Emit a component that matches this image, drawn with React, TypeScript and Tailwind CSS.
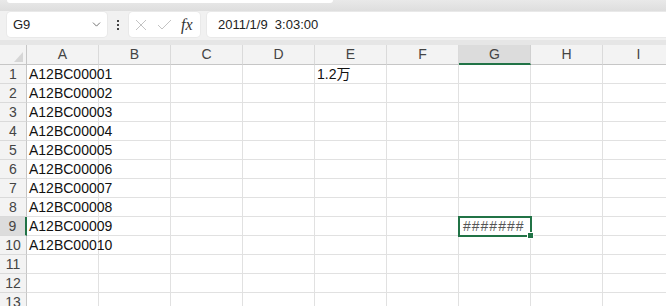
import React from 'react';
import { ChevronDown } from 'lucide-react';

const cols = ['A', 'B', 'C', 'D', 'E', 'F', 'G', 'H', 'I'];
const rows = Array.from({ length: 13 }, (_, i) => i + 1);

const cellValue = (r: number, c: string): string => {
  if (c === 'A' && r <= 10) return `A12BC000${String(r).padStart(2, '0')}`;
  if (c === 'E' && r === 1) return '1.2万';
  if (c === 'G' && r === 9) return '#######';
  return '';
};

const FormulaBar = () => (
  <div className="flex h-[29px] items-start bg-[#f1f1f1] pt-[1px]">
    {/* Name box */}
    <div className="ml-[7px] flex h-[25px] w-[100px] items-center justify-between rounded-[4px] bg-white pr-[4px] pl-[6px] shadow-[0_0_0_1px_#e9e9e9]">
      <span className="text-[13px] text-[#222]">G9</span>
      <ChevronDown size={13} strokeWidth={1.5} className="text-[#555]" />
    </div>
    {/* more dots */}
    <div className="flex h-[25px] w-[22px] flex-col items-center justify-center gap-[2px]">
      <div className="h-[2px] w-[2px] bg-[#444]" />
      <div className="h-[2px] w-[2px] bg-[#444]" />
      <div className="h-[2px] w-[2px] bg-[#444]" />
    </div>
    {/* cancel / enter / fx */}
    <div className="flex h-[25px] w-[71px] items-center rounded-[4px] bg-white pl-[6px] shadow-[0_0_0_1px_#e9e9e9]">
      <svg width="12" height="12" viewBox="0 0 12 12" className="mr-[10px]">
        <path d="M1 1 L11 11 M11 1 L1 11" stroke="#c3c3c3" strokeWidth="1" fill="none" />
      </svg>
      <svg width="15" height="12" viewBox="0 0 15 12" className="mr-[9px]">
        <path d="M1 6 L5 10 L14 1" stroke="#c3c3c3" strokeWidth="1" fill="none" />
      </svg>
      <span className="font-['Liberation_Serif',serif] text-[16px] leading-none text-[#333] italic">fx</span>
    </div>
    {/* formula input */}
    <div className="ml-[7px] flex h-[25px] flex-1 items-center rounded-l-[4px] bg-white pl-[11px] shadow-[0_0_0_1px_#e9e9e9]">
      <span className="text-[13px] whitespace-pre text-[#222]">2011/1/9  3:03:00</span>
    </div>
  </div>
);

const Grid = () => (
  <div className="grid w-[675px] grid-cols-[27px_repeat(9,72px)]">
    {/* corner */}
    <div className="flex h-[20px] items-end justify-end border-r border-b border-[#c6c6c6] bg-[#f3f3f3] pr-[3px] pb-[2px]">
      <svg width="9" height="10" viewBox="0 0 9 10">
        <polygon points="9,0 9,10 0,10" fill="#d6d6d6" />
      </svg>
    </div>
    {cols.map(c => (
      <div
        key={c}
        className={`flex h-[20px] items-center justify-center border-r text-[14px] text-[#444] ${
          c === 'G'
            ? 'border-b-2 border-r-[#d0d0d0] border-b-[#217346] bg-[#dcdcdc]'
            : 'border-b border-r-[#dadada] border-b-[#c6c6c6] bg-[#f3f3f3]'
        }`}
      >
        {c}
      </div>
    ))}
    {rows.map(r => (
      <React.Fragment key={r}>
        <div
          className={`flex h-[19px] items-center justify-center border-b border-b-[#dadada] text-[14px] leading-none text-[#444] ${
            r === 9 ? 'border-r-2 border-r-[#217346] bg-[#dcdcdc]' : 'border-r border-r-[#c6c6c6] bg-[#f3f3f3]'
          }`}
        >
          {r}
        </div>
        {cols.map(c => {
          const v = cellValue(r, c);
          const selected = c === 'G' && r === 9;
          return (
            <div
              key={c}
              className={`relative flex h-[19px] items-center border-r border-b border-[#e1e1e1] text-[14px] leading-none whitespace-nowrap ${
                selected ? 'z-10 pl-[4px] tracking-[1px] text-[#555]' : 'pl-[2px] text-[#111]'
              }`}
            >
              {v}
              {selected && (
                <>
                  <div className="absolute -top-[1px] -left-[1px] h-[21px] w-[74px] border-2 border-[#217346]" />
                  <div className="absolute -right-[4px] -bottom-[4px] h-[7px] w-[7px] border border-white bg-[#217346]" />
                </>
              )}
            </div>
          );
        })}
      </React.Fragment>
    ))}
  </div>
);

export default function App() {
  return (
    <div className="h-[306px] w-[666px] overflow-hidden bg-white font-['Liberation_Sans','Noto_Sans_CJK_SC',sans-serif]">
      <div className="h-[11px] bg-gradient-to-b from-[#e9e9e9] to-[#dedede]">
        <div className="ml-[7px] h-[3px] w-[326px] rounded-b-[3px] bg-white" />
      </div>
      <FormulaBar />
      <div className="h-[5px] bg-[#e6e6e6]" />
      <Grid />
    </div>
  );
}
